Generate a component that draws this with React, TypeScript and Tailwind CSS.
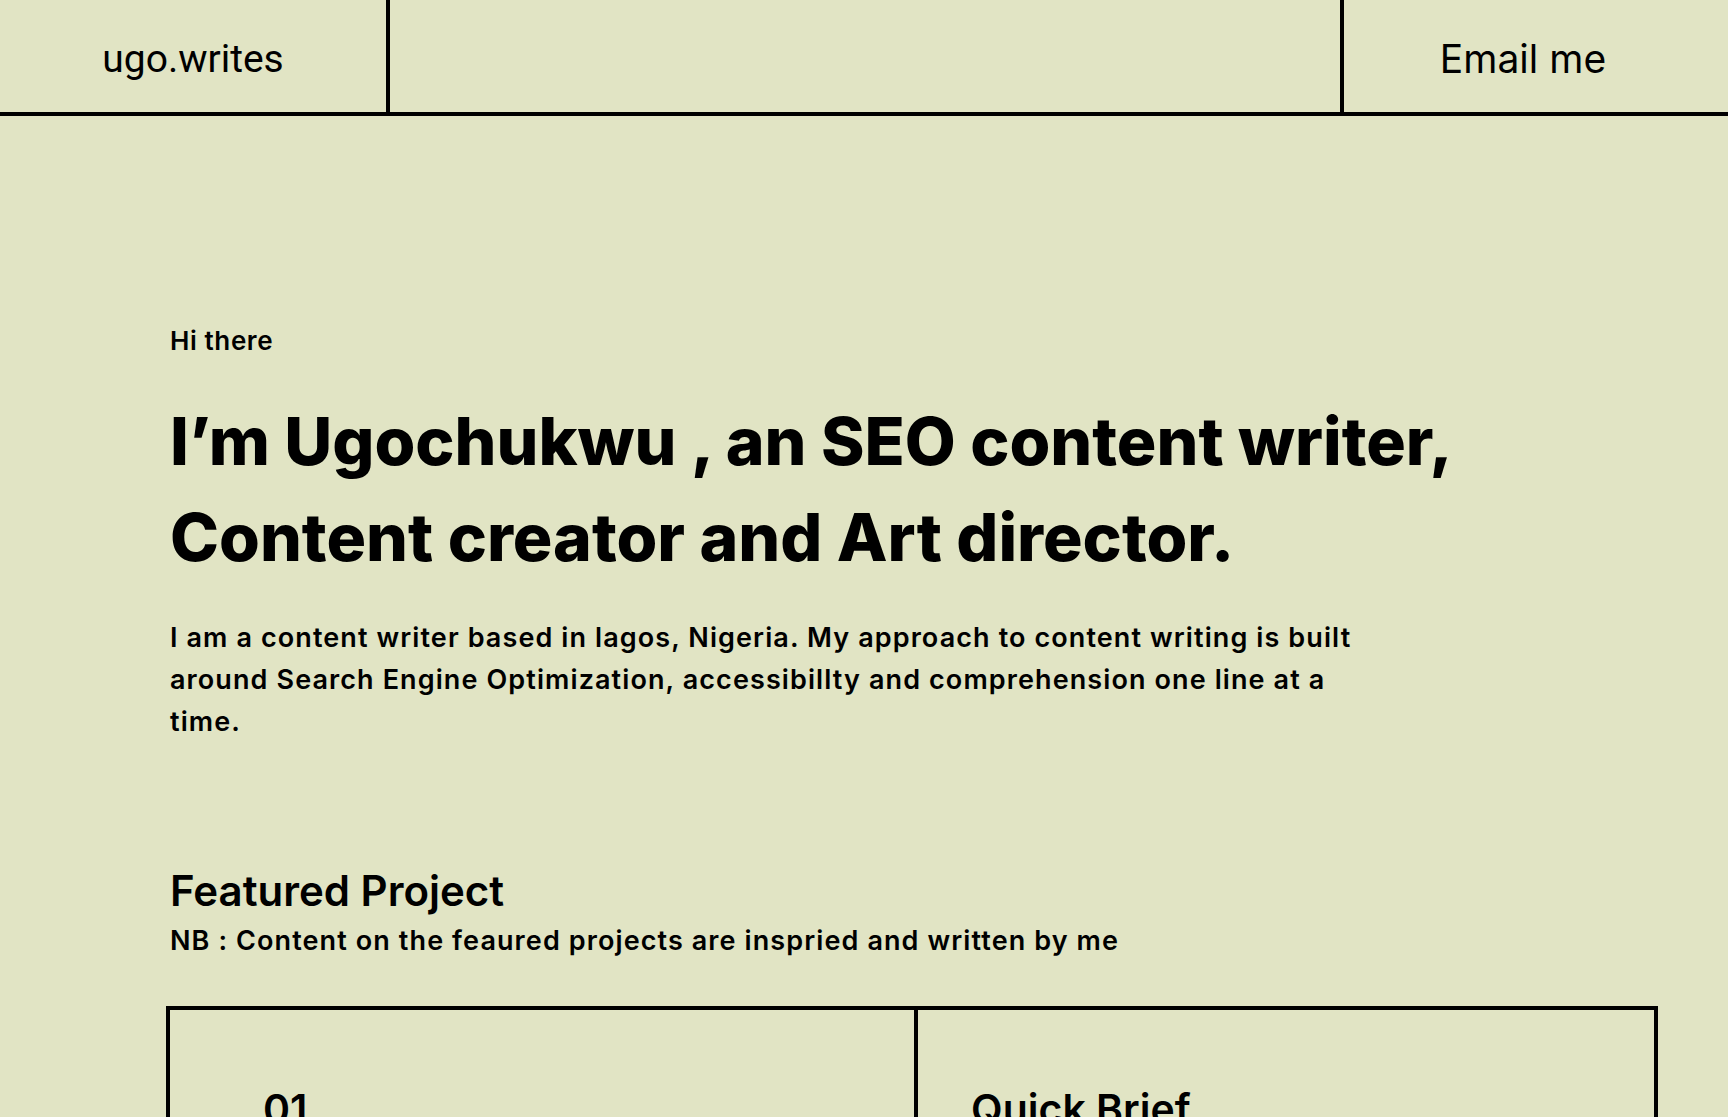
import React from "react"

const sans = "font-['Inter','Liberation_Sans',sans-serif]"

function Header() {
  return (
    <header className="flex h-[116px] border-b-4 border-black">
      <div className="w-[390px] flex items-center justify-center pt-[6px] border-r-4 border-black">
        <span className="text-[39px] font-['Roboto','Inter',sans-serif] text-black">ugo.writes</span>
      </div>
      <div className="flex-1"></div>
      <div className="w-[388px] flex items-center justify-center pt-[6px] pr-[26px] border-l-4 border-black">
        <span className={`text-[39px] ${sans} text-black`}>Email me</span>
      </div>
    </header>
  )
}

function Hero() {
  return (
    <section className="flex flex-col">
      <p className="text-[26px] font-semibold leading-[32px] tracking-[0.6px]">Hi there</p>
      <h1 className="mt-[36px] text-[66px] font-extrabold leading-[96px]">
        I’m Ugochukwu , an SEO content writer,
        <br />
        Content creator and Art director.
      </h1>
      <p className="mt-[32px] max-w-[1205px] text-[27px] font-semibold leading-[42px] tracking-[1.1px]">
        I am a content writer based in lagos, Nigeria. My approach to content writing is built around Search
        Engine Optimization, accessibillty and comprehension one line at a time.
      </p>
    </section>
  )
}

function Featured() {
  return (
    <section className="mt-[120px] flex flex-col">
      <h2 className="text-[42px] font-semibold leading-[56px]">Featured Project</h2>
      <p className="mt-[4px] text-[27px] font-semibold leading-[36px] tracking-[1.1px]">
        NB : Content on the feaured projects are inspried and written by me
      </p>
      <div className="mt-[47px] flex border-4 border-black w-[1492px] -ml-[4px] h-[400px]">
        <div className="w-[748px] border-r-4 border-black pl-[93px] pt-[69px]">
          <span className="text-[41px] font-semibold">01</span>
        </div>
        <div className="flex-1 pl-[53px] pt-[69px]">
          <h3 className="text-[41px] font-semibold">Quick Brief</h3>
        </div>
      </div>
    </section>
  )
}

export default function App() {
  return (
    <div className={`min-h-screen bg-[#e1e4c4] text-black ${sans}`}>
      <Header />
      <main className="pl-[170px] pr-[70px] pt-[209px] pb-[80px]">
        <Hero />
        <Featured />
      </main>
    </div>
  )
}
